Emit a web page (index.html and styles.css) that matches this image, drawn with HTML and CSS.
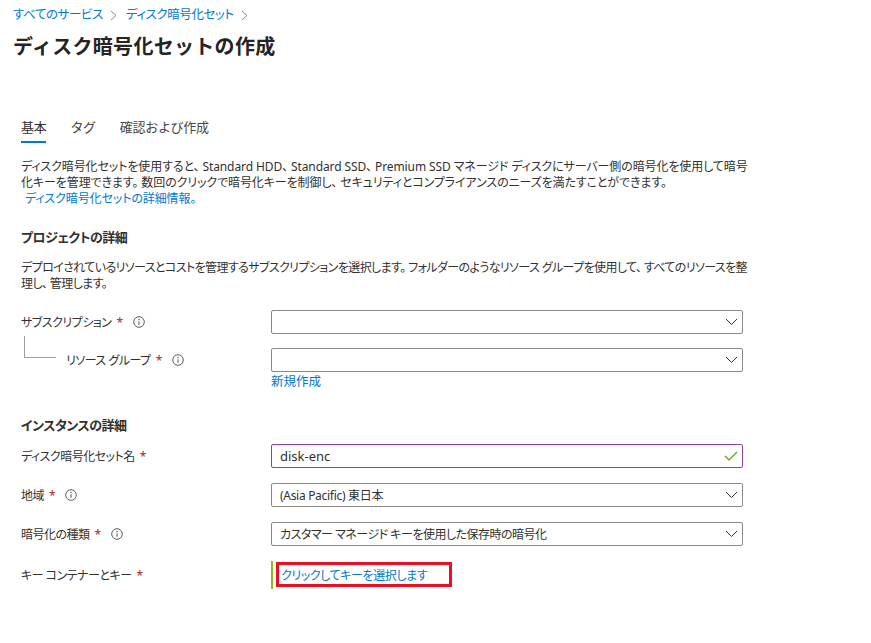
FILE: index.html
```html
<!DOCTYPE html>
<html lang="ja">
<head>
<meta charset="utf-8">
<title>ディスク暗号化セットの作成</title>
<link rel="stylesheet" href="styles.css">
</head>
<body>
<div class="page">
  <nav class="breadcrumb">
    <a class="crumb" href="#">すべてのサービス</a>
    <svg class="crumb-sep" width="7" height="11" viewBox="0 0 7 11"><path d="M1 1 L6 5.5 L1 10" fill="none" stroke="#8a8886" stroke-width="1"/></svg>
    <a class="crumb" href="#">ディスク暗号化セット</a>
    <svg class="crumb-sep" width="7" height="11" viewBox="0 0 7 11"><path d="M1 1 L6 5.5 L1 10" fill="none" stroke="#8a8886" stroke-width="1"/></svg>
  </nav>
  <h1 class="title">ディスク暗号化セットの作成</h1>

  <div class="content">
    <div class="tabs">
      <span class="tab active">基本</span>
      <span class="tab">タグ</span>
      <span class="tab">確認および作成</span>
    </div>

    <p class="desc">ディスク暗号化セットを使用すると、 Standard HDD、 Standard SSD、 Premium SSD マネージド ディスクにサーバー側の暗号化を使用して暗号<br>化キーを管理できます。 数回のクリックで暗号化キーを制御し、 セキュリティとコンプライアンスのニーズを満たすことができます。<br><a class="link more" href="#">ディスク暗号化セットの詳細情報。</a></p>

    <h2 class="section">プロジェクトの詳細</h2>
    <p class="desc desc-project">デプロイされているリソースとコストを管理するサブスクリプションを選択します。 フォルダーのようなリソース グループを使用して、 すべてのリソースを整<br>理し、 管理します。</p>

    <div class="row row-first">
      <div class="label">サブスクリプション<span class="req">*</span>
        <svg class="info" width="12" height="12" viewBox="0 0 12 12"><circle cx="6" cy="6" r="5.3" fill="none" stroke="#605e5c" stroke-width="1"/><circle cx="6" cy="3.6" r="0.75" fill="#605e5c"/><path d="M6 5.3 V8.8" stroke="#605e5c" stroke-width="1.1"/></svg>
      </div>
      <div class="field">
        <div class="select"><span class="value"></span>
          <svg class="chev" width="13" height="8" viewBox="0 0 13 8"><path d="M1 1 L6.5 6.5 L12 1" fill="none" stroke="#323130" stroke-width="1"/></svg>
        </div>
      </div>
    </div>

    <div class="row row-sub">
      <div class="label label-indent"><span class="tree"></span><span class="label-text">リソース グループ<span class="req">*</span></span>
        <svg class="info" width="12" height="12" viewBox="0 0 12 12"><circle cx="6" cy="6" r="5.3" fill="none" stroke="#605e5c" stroke-width="1"/><circle cx="6" cy="3.6" r="0.75" fill="#605e5c"/><path d="M6 5.3 V8.8" stroke="#605e5c" stroke-width="1.1"/></svg>
      </div>
      <div class="field">
        <div class="select"><span class="value"></span>
          <svg class="chev" width="13" height="8" viewBox="0 0 13 8"><path d="M1 1 L6.5 6.5 L12 1" fill="none" stroke="#323130" stroke-width="1"/></svg>
        </div>
        <a class="link new" href="#">新規作成</a>
      </div>
    </div>

    <h2 class="section section-instance">インスタンスの詳細</h2>

    <div class="row row-instance">
      <div class="label">ディスク暗号化セット名<span class="req">*</span></div>
      <div class="field">
        <div class="select input-valid"><span class="value text">disk-enc</span>
          <svg class="check" width="14" height="10" viewBox="0 0 14 10"><path d="M1 5 L5 9 L13 1" fill="none" stroke="#57a300" stroke-width="1.2"/></svg>
        </div>
      </div>
    </div>

    <div class="row">
      <div class="label">地域<span class="req">*</span>
        <svg class="info" width="12" height="12" viewBox="0 0 12 12"><circle cx="6" cy="6" r="5.3" fill="none" stroke="#605e5c" stroke-width="1"/><circle cx="6" cy="3.6" r="0.75" fill="#605e5c"/><path d="M6 5.3 V8.8" stroke="#605e5c" stroke-width="1.1"/></svg>
      </div>
      <div class="field">
        <div class="select"><span class="value">(Asia Pacific) 東日本</span>
          <svg class="chev" width="13" height="8" viewBox="0 0 13 8"><path d="M1 1 L6.5 6.5 L12 1" fill="none" stroke="#323130" stroke-width="1"/></svg>
        </div>
      </div>
    </div>

    <div class="row">
      <div class="label">暗号化の種類<span class="req">*</span>
        <svg class="info" width="12" height="12" viewBox="0 0 12 12"><circle cx="6" cy="6" r="5.3" fill="none" stroke="#605e5c" stroke-width="1"/><circle cx="6" cy="3.6" r="0.75" fill="#605e5c"/><path d="M6 5.3 V8.8" stroke="#605e5c" stroke-width="1.1"/></svg>
      </div>
      <div class="field">
        <div class="select"><span class="value long">カスタマー マネージド キーを使用した保存時の暗号化</span>
          <svg class="chev" width="13" height="8" viewBox="0 0 13 8"><path d="M1 1 L6.5 6.5 L12 1" fill="none" stroke="#323130" stroke-width="1"/></svg>
        </div>
      </div>
    </div>

    <div class="row row-key">
      <div class="label">キー コンテナーとキー<span class="req">*</span></div>
      <div class="field">
        <div class="key-picker">
          <a class="key-link" href="#">クリックしてキーを選択します</a>
        </div>
      </div>
    </div>
  </div>
</div>
</body>
</html>
```

FILE: styles.css
```css
* { box-sizing: border-box; }

html, body {
  margin: 0;
  padding: 0;
  background: #ffffff;
}

body {
  font-family: "Noto Sans", "Noto Sans CJK JP", sans-serif;
  font-feature-settings: "palt";
  color: #323130;
  font-size: 12px;
}

.page {
  padding: 6px 0 0 13px;
}

a { text-decoration: none; }

.breadcrumb {
  display: flex;
  align-items: center;
  height: 18px;
  line-height: 18px;
}

.crumb {
  color: #0078d4;
  font-size: 12.5px;
  letter-spacing: -0.4px;
}

.crumb-sep {
  margin: 0 9px 0 7px;
}

.title {
  margin: 9px 0 0 0;
  font-size: 20px;
  line-height: 28px;
  font-weight: 600;
  color: #252423;
  letter-spacing: 0.3px;
  font-feature-settings: normal;
}

.content {
  padding-left: 8px;
}

.tabs {
  display: flex;
  gap: 24px;
  margin-top: 57px;
}

.tab {
  font-size: 13px;
  line-height: 18px;
  padding-bottom: 5px;
  border-bottom: 2px solid transparent;
  color: #484644;
  font-feature-settings: normal;
  letter-spacing: -0.3px;
}

.tab.active {
  color: #323130;
  border-bottom-color: #0078d4;
}

.desc {
  margin: 16px 0 0 0;
  line-height: 16px;
  white-space: nowrap;
  font-size: 12px;
  letter-spacing: -0.1px;
}

.link {
  color: #0078d4;
}

.more {
  margin-left: 4px;
}

.section {
  margin: 21px 0 0 0;
  font-size: 13px;
  line-height: 18px;
  font-weight: 700;
  color: #323130;
  letter-spacing: -0.5px;
}

.desc-project {
  margin-top: 14px;
  letter-spacing: -0.6px;
}

.row {
  display: grid;
  grid-template-columns: 250px 472px;
  margin-top: 15px;
}

.row-first { margin-top: 18px; }
.row-sub { margin-top: 14px; }
.row-instance { margin-top: 10px; }

.label {
  align-self: start;
  display: flex;
  align-items: center;
  min-height: 24px;
  font-size: 12px;
  letter-spacing: -0.5px;
  color: #323130;
}

.tree {
  align-self: flex-start;
  width: 32px;
  height: 22px;
  margin: -12px 0 0 3px;
  border-left: 1px solid #a19f9d;
  border-bottom: 1px solid #a19f9d;
}

.label-text {
  margin-left: 10px;
}

.req {
  color: #a4262c;
  margin-left: 5px;
}

.info {
  margin-left: 10px;
}

.field {
  display: flex;
  flex-direction: column;
}

.select {
  display: flex;
  align-items: center;
  justify-content: space-between;
  height: 24px;
  border: 1px solid #8a8886;
  border-radius: 2px;
  padding: 0 3px 0 8px;
  background: #ffffff;
}

.value {
  font-size: 12px;
  letter-spacing: -0.3px;
  color: #323130;
}

.value.long {
  letter-spacing: -0.5px;
}

.value.text {
  font-size: 13px;
  letter-spacing: 0;
}

.chev { margin-right: 1px; }

.input-valid {
  border-color: #8a3fb0;
  padding-right: 4px;
}

.new {
  line-height: 16px;
  margin-top: 2px;
  font-size: 12.5px;
}

.section-instance {
  margin-top: 26px;
}

.row-key .label {
  min-height: 28px;
}

.key-picker {
  display: flex;
  align-items: stretch;
  height: 28px;
  border-left: 2px solid #8cbd18;
  padding: 1px 0 2px 3px;
}

.key-link {
  display: flex;
  align-items: center;
  width: 176px;
  border: 3px solid #e81123;
  padding-left: 2px;
  color: #0078d4;
  font-size: 12px;
  letter-spacing: -0.4px;
}
```
